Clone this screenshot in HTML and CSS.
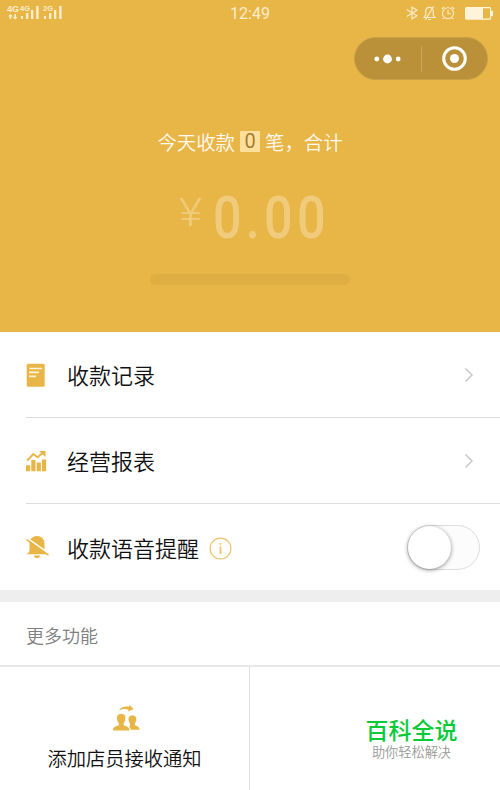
FILE: index.html
```html
<!doctype html>
<html lang="zh-CN">
  <head>
    <meta charset="UTF-8" />
    <meta name="viewport" content="width=device-width, initial-scale=1.0" />
    <title>收款</title>
    <link rel="stylesheet" href="styles.css">
  </head>
  <body>
    <header class="hero">
      <div class="status-bar">
        <div class="signals">
          <div class="network">
            <span class="network-main">4G</span>
            <svg width="10" height="6" viewBox="0 0 10 6" fill="currentColor">
              <path d="M2.5 0L5 2.5H3.3V5H1.7V2.5H0zM7.2 5.5L4.7 3H6.4V0H8V3H9.7z" />
            </svg>
          </div>
          <div class="signal">
            <span class="signal-type">4G</span>
            <svg width="18" height="13" viewBox="0 0 18 13" fill="currentColor">
              <path d="M0 10h2v3H0zM5 7h2.3v6H5zM10 4h2.3v9H10zM15.2 0h2.4v13h-2.4z" />
            </svg>
          </div>
          <div class="signal signal-second">
            <span class="signal-type">2G</span>
            <svg width="18" height="13" viewBox="0 0 18 13" fill="currentColor">
              <path d="M0 10h2v3H0zM5 7h2.3v6H5zM10 4h2.3v9H10zM15.2 0h2.4v13h-2.4z" />
            </svg>
          </div>
        </div>
        <time class="clock">12:49</time>
        <div class="status-icons">
          <svg width="12" height="14" viewBox="0 0 12 14" fill="none" stroke="currentColor" stroke-width="1.1">
            <path d="M.7 3.5L11 9.7L6 13V1L11 4.2L.7 10.5" />
          </svg>
          <svg width="13" height="15" viewBox="0 0 13 15" fill="none" stroke="currentColor" stroke-width="1.2">
            <path d="M1 11.5h11L10.3 9V5.4C10.3 2.8 8.6 1.4 6.5 1.4S2.7 2.8 2.7 5.4V9zM5 13.5h3M10.5.5L2.3 14" />
          </svg>
          <svg width="14" height="14" viewBox="0 0 14 14" fill="none" stroke="currentColor" stroke-width="1.1">
            <circle cx="7" cy="7.3" r="5.5" />
            <path d="M7 4v3.7h2.8M.8 3L3.3.9M13.2 3L10.7.9M2.8 12l-1 1.2M11.2 12l1 1.2" />
          </svg>
          <svg class="battery" width="28" height="13" viewBox="0 0 28 13">
            <rect x=".6" y=".6" width="25" height="11.6" rx="1" fill="none" stroke="currentColor" stroke-width="1.2" />
            <path d="M1 1h17v11H1zM26 4h2v5h-2z" fill="currentColor" />
          </svg>
        </div>
      </div>

      <div class="capsule">
        <button type="button" class="capsule-btn" aria-label="更多">
          <svg width="27" height="10" viewBox="0 0 27 10" fill="#fff">
            <circle cx="2.8" cy="5" r="2.4" />
            <circle cx="13.5" cy="5" r="4.4" />
            <circle cx="24.2" cy="5" r="2.4" />
          </svg>
        </button>
        <span class="capsule-line"></span>
        <button type="button" class="capsule-btn" aria-label="关闭">
          <svg width="25" height="25" viewBox="0 0 25 25">
            <circle cx="12.5" cy="12.5" r="10.8" fill="none" stroke="#fff" stroke-width="3" />
            <circle cx="12.5" cy="12.5" r="4.5" fill="#fff" />
          </svg>
        </button>
      </div>

      <p class="summary">今天收款<span class="count">0</span>笔，合计</p>
      <div class="amount">
        <span class="currency">¥</span>
        <span class="value">0.00</span>
      </div>
      <div class="slot"></div>
    </header>

    <main>
      <ul class="menu">
        <li class="menu-item">
          <svg class="menu-icon" width="24" height="24" viewBox="0 0 24 24">
            <rect x=".7" y=".7" width="18" height="23" rx="1.5" fill="#e8b547" />
            <path d="M3.500 5.500h12.700M3 9.400h10M3 13.300h7" stroke="#fff3d8" stroke-width="1.700" />
          </svg>
          <span class="menu-label">收款记录</span>
          <svg class="arrow" width="10" height="16" viewBox="0 0 10 16">
            <path d="M1.500 1.500L8 8L1.500 14.500" />
          </svg>
        </li>
        <li class="menu-item">
          <svg class="menu-icon" width="24" height="24" viewBox="0 0 24 24">
            <path d="M0 16.300h4.200v6H0zM5.300 11h4.200v11.300H5.300zM10.700 13.500h4.200v8.800h-4.200zM15.900 10.500h4.200v11.800h-4.200z" fill="#e8b547" />
            <path d="M1.200 11.500L7.300 5L11.500 8.300L17.500 3.300" fill="none" stroke="#e8b547" stroke-width="1.900" />
            <path d="M13 2h6.500v6z" fill="#e8b547" />
          </svg>
          <span class="menu-label">经营报表</span>
          <svg class="arrow" width="10" height="16" viewBox="0 0 10 16">
            <path d="M1.500 1.500L8 8L1.500 14.500" />
          </svg>
        </li>
        <li class="menu-item">
          <svg class="menu-icon" width="24" height="24" viewBox="0 0 24 24">
            <path d="M.3 19.300c2.200-1 3.200-2 3.200-4.500V8.500C3.500 4 6.700 1 11 1s7.500 3 7.500 7.500v6.300c0 2.500 1.200 3.500 3.300 4.500zM8 20.500h6c-.2 1.800-1.400 2.700-3 2.700s-2.800-.9-3-2.700z" fill="#e8b547" />
            <path d="M1.200 3.200L23.200 18.700" stroke="#fff" stroke-width="1.500" />
            <path d="M.5 4.700L22.500 20.200" stroke="#e8b547" stroke-width="1.500" />
          </svg>
          <span class="menu-label">收款语音提醒</span>
          <svg class="info" width="23" height="23" viewBox="0 0 23 23">
            <circle cx="11.500" cy="11.500" r="10.400" fill="none" stroke="#edc46c" stroke-width="1.200" />
            <path d="M10.600 9.400h1.800v7.600h-1.800zM10.600 6h1.800v1.800h-1.800z" fill="#edc46c" />
          </svg>
          <span class="switch" role="switch" aria-checked="false"></span>
        </li>
      </ul>

      <section class="more">
        <h2 class="more-title">更多功能</h2>
        <div class="grid">
          <div class="cell">
            <svg class="cell-icon" width="27" height="27" viewBox="0 0 27 27" fill="#e8b547">
              <path d="M0 25.500c0-3.800 2.500-4 5.800-5.200v-2.200C4.700 17 4.300 15.800 4.200 14.500C3.300 10.800 5 9 8.200 9s4.900 1.800 4 5.500c-.1 1.300-.5 2.500-1.600 3.600v2.200c3.300 1.200 5.900 1.400 5.900 5.200z" />
              <path d="M17.700 24.700h8.800c0-3.200-2.200-3.600-4.700-4.500v-1.800c.8-.9 1.200-1.900 1.300-2.900c.8-3.300-.8-5-3.700-5s-4.400 1.700-3.700 5c.1 1 .5 2 1.300 2.900v2.300l-1 1.100c1.100.7 1.600 1.600 1.700 2.900z" />
              <path d="M5.800 5.700C8.400 1.800 12 .8 16 1.800L16.300 0L20.800 4L15 6.400l.4-2C12 3.500 8.800 3.700 5.800 5.700z" />
            </svg>
            <span class="cell-label">添加店员接收通知</span>
          </div>
          <div class="cell cell-brand">
            <strong class="brand">百科全说</strong>
            <span class="slogan">助你轻松解决</span>
          </div>
        </div>
      </section>
    </main>
  </body>
</html>
```
FILE: styles.css
```css
* {
  box-sizing: border-box;
}
body {
  margin: 0;
  height: 790px;
  overflow: hidden;
  background: #fff;
  color: #111;
  font-family: "Noto Sans CJK SC", sans-serif;
  font-weight: 350;
}
svg {
  display: block;
  flex-shrink: 0;
}

/* top panel */
.hero {
  display: flex;
  flex-direction: column;
  align-items: center;
  height: 332px;
  background: #e8b547;
}
.status-bar {
  display: grid;
  grid-template-columns: 1fr auto 1fr;
  width: 100%;
  height: 37px;
  padding: 5px 7px 0;
  color: #fbedcd;
}
.signals {
  display: flex;
  font: bold 7.5px/7px "Liberation Sans", sans-serif;
}
.network {
  width: 13px;
}
.network-main {
  display: block;
  font-size: 9px;
  line-height: 9px;
}
.network svg {
  margin-left: 1px;
}
.signal {
  display: grid;
  align-items: start;
  height: 15px;
}
.signal-type,
.signal svg {
  grid-area: 1 / 1;
}
.signal svg {
  margin: 1px 0 0 1px;
}
.signal-second {
  margin-left: 4px;
}
.clock {
  font: 16px/18px Roboto, sans-serif;
}
.status-icons {
  display: flex;
  justify-content: flex-end;
  align-items: center;
  gap: 5px;
  height: 16px;
}
.battery {
  margin-left: 5px;
  color: #fff4da;
}
.capsule {
  display: flex;
  align-items: center;
  align-self: flex-end;
  width: 134px;
  height: 43px;
  margin-right: 12px;
  border: 1px solid #c6a04b;
  border-radius: 22px;
  background: #ba9139;
}
.capsule-btn {
  display: flex;
  flex: 1;
  justify-content: center;
  padding: 0;
  border: none;
  background: none;
}
.capsule-btn:first-child {
  padding-right: 1px;
}
.capsule-line {
  width: 1px;
  height: 26px;
  background: #c9a85f;
}
.summary {
  display: flex;
  align-items: center;
  height: 28px;
  margin: 47px 0 0;
  color: #fffaf0;
  font-size: 19.4px;
}
.count {
  width: 20px;
  margin: 1px 5px 0;
  border-radius: 1px;
  background: #ffdf9b;
  color: #a47e30;
  font: 20px/21px Roboto, sans-serif;
  text-align: center;
}
.amount {
  display: flex;
  align-items: flex-start;
  width: 143px;
  height: 68px;
  margin: 32px 0 0;
  color: #f0cb7c;
  font-family: Roboto, sans-serif;
}
.currency {
  font-size: 39px;
  font-weight: 300;
  line-height: 52px;
  transform: scaleX(1.15);
  transform-origin: left;
}
/* narrow, widely spaced digits */
.value {
  margin-left: 14px;
  font-size: 60px;
  font-weight: 500;
  letter-spacing: 5px;
  line-height: 62px;
  transform: scaleX(0.84);
  transform-origin: left;
}
.slot {
  width: 200px;
  height: 11px;
  margin-top: 19px;
  border-radius: 6px;
  background: #dfae43;
}

/* menu rows */
.menu {
  margin: 0;
  padding: 0;
  border-bottom: 12px solid #eee;
  list-style: none;
}
.menu-item {
  display: flex;
  align-items: center;
  height: 86px;
  margin-left: 26px;
  padding-right: 26px;
  border-bottom: 1px solid #ddd;
}
.menu-item:last-child {
  padding-right: 20px;
  border-bottom: none;
}
.menu-label {
  margin-left: 17px;
  padding-bottom: 1px;
  font-size: 22px;
}
.arrow {
  margin-left: auto;
  fill: none;
  stroke: #c8c8cc;
  stroke-width: 1.5;
}
.info {
  margin: 2px 0 0 10px;
}
.switch {
  width: 73px;
  height: 45px;
  margin-left: auto;
  border: 1px solid #ddd;
  border-radius: 23px;
  background: #fcfcfc;
}
.switch::before {
  content: "";
  display: block;
  width: 43px;
  height: 43px;
  border-radius: 50%;
  background: #fff;
  box-shadow: 0 1px 4px rgba(0, 0, 0, 0.45);
}

/* more features */
.more-title {
  height: 63px;
  margin: 0;
  padding-left: 26px;
  color: #808080;
  font-size: 18px;
  font-weight: 350;
  line-height: 66px;
}
.grid {
  display: grid;
  grid-template-columns: 250px 1fr;
  height: 125px;
  border-top: 2px solid #e8e8e8;
}
.cell {
  display: flex;
  flex-direction: column;
  align-items: center;
  padding-top: 38px;
  border-right: 1px solid #e0e0e0;
}
.cell-icon {
  margin-left: 3px;
}
.cell-label {
  margin-top: 12px;
  font-size: 19.3px;
  line-height: 28px;
}
.cell-brand {
  padding: 48px 0 0 73px;
  border-right: none;
}
.brand {
  color: #08cb38;
  font-size: 23px;
  font-weight: 500;
  line-height: 28px;
}
.slogan {
  color: #999;
  font-size: 13.2px;
  line-height: 17px;
}
```
